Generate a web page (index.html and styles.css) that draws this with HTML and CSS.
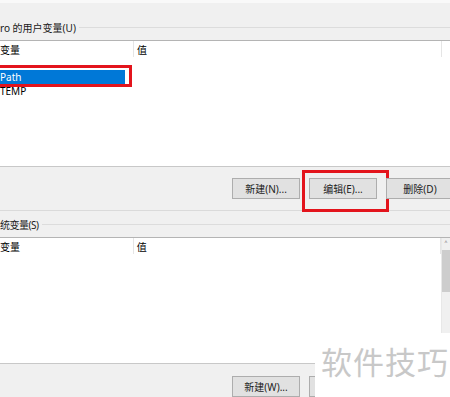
FILE: index.html
```html
<!DOCTYPE html>
<html lang="zh-CN">
<head>
    <meta charset="UTF-8">
    <title>环境变量</title>
    <link rel="stylesheet" href="styles.css">
</head>
<body>
    <div class="screen">
        <!-- 用户变量 -->
        <div class="group-title"><span>ro 的用户变量(U)</span></div>
        <div class="list list-user">
            <div class="list-head">
                <span class="col-name">变量</span>
                <span class="col-value">值</span>
            </div>
            <div class="rows">
                <div class="row selected">Path<span class="mark mark-row"></span></div>
                <div class="row">TEMP</div>
            </div>
        </div>
        <div class="buttons">
            <button class="btn">新建(N)...</button>
            <button class="btn">编辑(E)...<span class="mark mark-btn"></span></button>
            <button class="btn">删除(D)</button>
        </div>

        <!-- 系统变量 -->
        <div class="group-title group-tight"><span>统变量(S)</span></div>
        <div class="list list-system">
            <div class="list-main">
                <div class="list-head">
                    <span class="col-name">变量</span>
                    <span class="col-value">值</span>
                </div>
            </div>
            <div class="scrollbar">
                <div class="sb-up">˄</div>
                <div class="sb-thumb"></div>
            </div>
        </div>
        <div class="buttons buttons-bottom">
            <button class="btn">新建(W)...</button>
            <button class="btn"></button>
        </div>

        <div class="watermark">软件技巧</div>
    </div>
</body>
</html>
```

FILE: styles.css
```css
/* Geral */
* {
    box-sizing: border-box;
}

body {
    margin: 0;
    background-color: #f0f0f0;
    font-family: "Noto Sans", "Noto Sans CJK SC", sans-serif;
    font-size: 10px;
    color: #000;
    overflow: hidden;
}

.screen {
    position: relative;
    width: 450px;
    height: 397px;
    overflow: hidden;
    border-top: 3px solid #f9f9f9;
}

/* Titulo do grupo */
.group-title {
    display: flex;
    align-items: center;
    height: 16px;
    margin: 16px 0 5px;
    color: #1a1a1a;
    white-space: nowrap;
}

.group-title::after {
    content: "";
    flex: 1;
    border-top: 1px solid #dcdcdc;
    margin-left: 3px;
}

.group-tight span {
    letter-spacing: -0.5px;
}

.group-title + .list-system,
.buttons + .group-title {
    margin-top: 5px;
}

/* Lista */
.list {
    background: #fff;
    border-top: 1px solid #b4b4b4;
    border-bottom: 1px solid #c8c8c8;
}

.list-user {
    height: 127px;
}

.list-system {
    display: flex;
    height: 127px;
}

.list-main {
    width: 441px;
}

.list-head {
    display: flex;
    height: 16px;
}

.list-head span {
    display: flex;
    align-items: center;
    height: 100%;
    border-right: 1px solid #e5e5e5;
}

.col-name {
    width: 134px;
}

.col-value {
    width: 308px;
    padding-left: 3px;
}

.rows {
    padding-top: 13px;
}

.row {
    position: relative;
    width: 125px;
    height: 14px;
    line-height: 14px;
}

.row.selected {
    background-color: #0078d7;
    color: #fff;
}

/* Marcacoes vermelhas */
.mark {
    position: absolute;
    border: 3px solid #e3141c;
}

.mark-row {
    left: -4px;
    top: -5px;
    width: 136px;
    height: 22px;
}

.mark-btn {
    left: -8px;
    top: -9px;
    width: 87px;
    height: 42px;
}

/* Barra de rolagem */
.scrollbar {
    flex: 1;
    background: #f0f0f0;
    border-left: 1px solid #e8e8e8;
}

.sb-up {
    height: 12px;
    line-height: 14px;
    font-size: 10px;
    color: #606060;
    text-align: center;
}

.sb-thumb {
    height: 42px;
    background: #cdcdcd;
}

/* Botoes */
.buttons {
    display: flex;
    gap: 9px;
    height: 44px;
    padding: 11px 0 0 232px;
    border-bottom: 1px solid #dadada;
}

.buttons-bottom {
    padding-top: 12px;
    border-bottom: none;
}

.btn {
    position: relative;
    flex-shrink: 0;
    width: 68px;
    height: 21px;
    padding: 0;
    background-color: #e1e1e1;
    border: 1px solid #adadad;
    font-family: inherit;
    font-size: 10px;
    color: #222;
}

/* Marca d'agua */
.watermark {
    position: absolute;
    left: 315px;
    top: 330px;
    right: 0;
    bottom: 0;
    padding: 14px 0 0 6px;
    background: #fff;
    font-size: 31px;
    line-height: 31px;
    letter-spacing: 1px;
    color: #c8c8c8;
}
```
